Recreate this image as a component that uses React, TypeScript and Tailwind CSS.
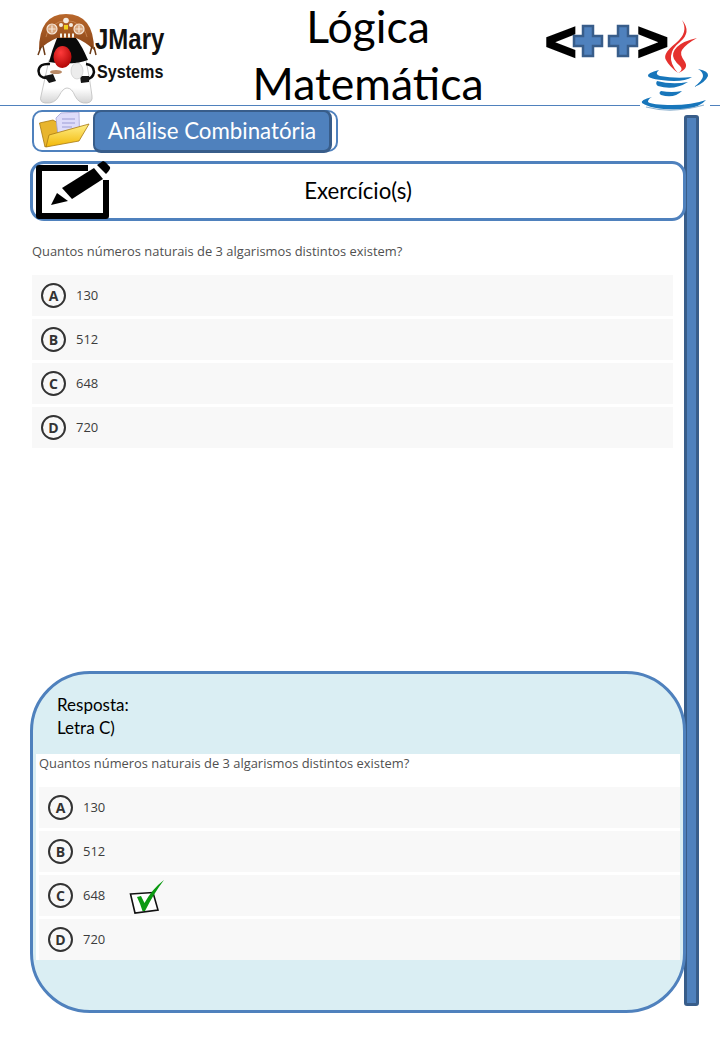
const calibri = "font-['Lato',sans-serif]";
const openSans = "font-['Open_Sans',sans-serif]";

const options = [
  { letter: "A", value: "130" },
  { letter: "B", value: "512" },
  { letter: "C", value: "648" },
  { letter: "D", value: "720" },
];

function DukeLogo() {
  return (
    <svg width="62" height="96" viewBox="36 10 62 96" className="shrink-0">
      <defs>
        <linearGradient id="hat" x1="0" y1="0" x2="0" y2="1">
          <stop offset="0" stopColor="#b9682c" />
          <stop offset="1" stopColor="#8a4518" />
        </linearGradient>
        <radialGradient id="nose" cx="0.4" cy="0.3" r="0.8">
          <stop offset="0" stopColor="#ff3b3b" />
          <stop offset="1" stopColor="#a80000" />
        </radialGradient>
        <linearGradient id="body" x1="0" y1="0" x2="0" y2="1">
          <stop offset="0.65" stopColor="#ffffff" />
          <stop offset="1" stopColor="#d4d4d4" />
        </linearGradient>
      </defs>
      <path d="M49 60 Q45 78 41 96 Q39 102 45 103 Q55 104 59 96 Q63 88 67 88 Q72 88 75 96 Q79 104 87 103 Q93 102 92 96 Q90 80 86 60 Z" fill="url(#body)" stroke="#bdbdbd" strokeWidth="0.8" />
      <path d="M57 38 L76 38 Q82 46 88 60 Q72 66 49 62 Q52 50 57 38 Z" fill="#0a0a0a" />
      <path d="M39 50 Q39 14 66 14 Q94 14 94 50 Q86 42 76 38 L57 38 Q47 42 39 50 Z" fill="url(#hat)" />
      <path d="M41 47 L38 55 M43 46 L45 55 M92 46 L90 54 M94 47 L96 55" stroke="#6b3a16" strokeWidth="1.500" fill="none" />
      <path d="M46 37 A21 21 0 0 1 87 37" fill="none" stroke="#d79a6c" strokeWidth="0.600" />
      <circle cx="52" cy="29" r="5" fill="#d9a67e" stroke="#f5e6d8" strokeWidth="1.200" />
      <path d="M52 25.500 V32.500 M48.500 29 H55.500" stroke="#f5e6d8" strokeWidth="1.200" />
      <circle cx="79" cy="29" r="5" fill="#d9a67e" stroke="#f5e6d8" strokeWidth="1.200" />
      <path d="M79 25.500 V32.500 M75.500 29 H82.500" stroke="#f5e6d8" strokeWidth="1.200" />
      <circle cx="66" cy="20.500" r="2.800" fill="#f5ece2" />
      <circle cx="61" cy="25" r="2" fill="#f5ece2" />
      <circle cx="71" cy="25" r="2" fill="#f5ece2" />
      <rect x="64" y="25" width="4" height="4.500" fill="#f2d21f" />
      <path d="M60 35.500 H62 M64 35.500 H66 M68 35.500 H70 M72 35.500 H74" stroke="#f4f1ea" strokeWidth="4" />
      <ellipse cx="62.500" cy="57" rx="9" ry="11" fill="url(#nose)" />
      <path d="M50 64 Q39 63 38.500 71 Q39 78 47 78" fill="none" stroke="#0a0a0a" strokeWidth="2.500" />
      <path d="M86 64 Q94 65 94 72 Q93 79 86 79" fill="none" stroke="#0a0a0a" strokeWidth="2.500" />
      <path d="M44 76 L53 74 L56 81 L49 83 Z" fill="#151515" />
      <path d="M80 76 L89 76 L89 82 L81 83 Z" fill="#151515" />
      <ellipse cx="56" cy="72" rx="6" ry="2" fill="#b98a66" />
      <ellipse cx="77" cy="71" rx="6" ry="8" fill="#ececec" stroke="#c4c4c4" strokeWidth="0.600" />
    </svg>
  );
}

function JavaLogo() {
  return (
    <svg width="70" height="96" viewBox="640 18 70 96" className="absolute left-[640px] top-[18px] z-10 bg-white">
      <path d="M682 20 Q689 32 676 43 Q662 54 666 60 Q669 66 678 73 Q670 64 671 56 Q672 48 680 42 Q692 32 682 20 Z" fill="#e5312e" />
      <path d="M697 38 Q683 41 677 47 Q671 53 674 59 Q677 64 680 66 Q684 70 678 73 Q689 69 685 62 Q679 54 682 50 Q686 44 697 38 Z" fill="#e5312e" />
      <path d="M659 70 Q647 73 648 76 Q650 80 674 81 Q686 81 692 77 Q676 79 660 76 Q654 74 659 70 Z" fill="#1776bb" />
      <path d="M698 69 Q709 71 708 76 Q705 83 694 87 Q703 80 703 76 Q703 72 698 69 Z" fill="#1776bb" />
      <path d="M657 81 Q672 85 688 82 Q674 91 658 86 Q655 84 657 81 Z" fill="#1776bb" />
      <path d="M661 91 Q672 93 682 91 Q674 99 661 95 Q658 93 661 91 Z" fill="#1776bb" />
      <path d="M652 97 Q640 100 642 103 Q654 111 686 109 Q700 107 706 100 Q692 105 672 105 Q652 105 648 102 Q648 99 652 97 Z" fill="#1776bb" />
      <path d="M646 107 Q672 114 704 105" fill="none" stroke="#8fb2cf" strokeWidth="1.200" />
    </svg>
  );
}

function PlusIcon() {
  return (
    <svg width="32" height="34" viewBox="0 0 32 34" className="shrink-0">
      <path d="M11 2 H21 V12 H30 V22 H21 V32 H11 V22 H2 V12 H11 Z" fill="#4f81bd" stroke="#385d8a" strokeWidth="2.500" />
    </svg>
  );
}

function FolderIcon() {
  return (
    <svg width="52" height="38" viewBox="39 112 52 38" className="shrink-0">
      <defs>
        <linearGradient id="folder" x1="0" y1="0" x2="0" y2="1">
          <stop offset="0" stopColor="#fff08a" />
          <stop offset="1" stopColor="#f2b705" />
        </linearGradient>
      </defs>
      <path d="M39.500 123 L53 120 L58 123 L60 140 L45 147 Z" fill="#e8b52e" stroke="#a8780f" strokeWidth="0.800" />
      <path d="M56 118 L61 113 L79 112 L79.500 132 L58 136 Z" fill="#dedcfa" stroke="#a3a3d6" strokeWidth="0.800" />
      <path d="M62 119 H75 M62 123 H75 M62 127 H72" stroke="#9c9cd6" strokeWidth="1.200" />
      <path d="M49 135 L89 124 L79 141 L46 147 Z" fill="url(#folder)" stroke="#a8780f" strokeWidth="0.800" />
    </svg>
  );
}

function PencilIcon() {
  return (
    <svg width="80" height="64" viewBox="34 157 80 64" className="absolute left-[1px] top-[-5px]">
      <path d="M88 166 H39 V214 H106 V178" fill="none" stroke="#000000" strokeWidth="6" strokeLinejoin="round" />
      <path d="M62 186 L94 166 L103 177 L72 197 Z" fill="#000000" />
      <path d="M57 191 L51 203 L68 199 Z" fill="#000000" />
      <path d="M97 163 L103 159 Q105 159 110 165 Q111 167 106 172 Z" fill="#000000" />
    </svg>
  );
}

function CheckIcon() {
  return (
    <svg width="39" height="38" viewBox="128 875 39 38" className="ml-[23px] shrink-0">
      <path d="M130.500 892 L153 890.500 L158 908 L135 911 Z" fill="#ffffff" stroke="#111111" strokeWidth="1.600" />
      <path d="M137 895 L141 894 L144.500 901 Q152 887 164 878 Q154 891 145 909 L142.500 909 Q140 901 137 895 Z" fill="#0b9a12" />
    </svg>
  );
}

function Quiz({ marked }: { marked?: boolean }) {
  return (
    <div className={openSans}>
      <p className="text-[12.900px] leading-[18px] text-[#505050]">Quantos números naturais de 3 algarismos distintos existem?</p>
      <div className="mt-[15px] flex flex-col gap-[3px]">
        {options.map((option) => (
          <div key={option.letter} className="flex h-[41px] items-center bg-[#f8f8f8] pl-[9px]">
            <span className="flex h-[25px] w-[25px] shrink-0 items-center justify-center rounded-full border-2 border-[#333333] text-[14px] font-bold text-[#333333]">
              {option.letter}
            </span>
            <span className="ml-[10px] text-[13px] font-medium text-[#3c3c3c]">{option.value}</span>
            {marked && option.letter === "C" && <CheckIcon />}
          </div>
        ))}
      </div>
    </div>
  );
}

export default function App() {
  return (
    <div className="relative h-[1040px] w-[720px] overflow-hidden bg-white text-black">
      {/* Header */}
      <header className="grid h-[106px] grid-cols-[240px_256px_224px] border-b border-[#4f81bd]">
        <div className="flex pl-[36px] pt-[10px]">
          <DukeLogo />
          <div className="-ml-[3px] font-['Liberation_Sans',sans-serif] font-bold text-[#111111]">
            <p className="mt-[11px] origin-left scale-x-[0.8] text-[30px] leading-[36px] whitespace-nowrap">JMary</p>
            <p className="mt-[3px] ml-[2px] origin-left scale-x-[0.85] text-[19px] leading-[24px] whitespace-nowrap">Systems</p>
          </div>
        </div>
        <h1 className={`${calibri} text-center text-[44.500px] whitespace-nowrap`}>
          <span className="block h-[54px] leading-[52px]">Lógica</span>
          <span className="block leading-[58px]">Matemática</span>
        </h1>
        <div className="relative z-20 flex h-[57px] items-center pl-[49px] pt-[24px] font-['Liberation_Sans',sans-serif] font-bold">
          <span className="w-[27px] text-center text-[54px] leading-[34px] [-webkit-text-stroke:2px_black]">&lt;</span>
          <PlusIcon />
          <span className="w-[3px]" />
          <PlusIcon />
          <span className="-ml-[2px] w-[28px] text-center text-[54px] leading-[34px] [-webkit-text-stroke:2px_black]">&gt;</span>
        </div>
      </header>
      <JavaLogo />

      <main className="flex">
        <div className="w-[684px] pl-[30px]">
          {/* Topic */}
          <div className="ml-[2px] mt-[4px] flex h-[42px] w-[306px] items-center rounded-[10px] border-[2.500px] border-[#4f81bd] pl-[5px] pr-[4px]">
            <FolderIcon />
            <div className={`${calibri} relative z-10 -my-[2px] ml-[2px] flex h-[43px] flex-1 items-center justify-center rounded-[8px] border-2 border-b-[3px] border-r-[3px] border-[#385d8a] bg-[#4f81bd] text-[22.300px] text-white`}>
              Análise Combinatória
            </div>
          </div>

          {/* Exercise heading */}
          <div className={`${calibri} relative z-10 mt-[9px] flex h-[60px] w-[656px] items-center justify-center rounded-[14px] border-[3px] border-[#4f81bd] bg-white text-[22.200px]`}>
            <PencilIcon />
            <span className="-mt-[1px]">Exercício(s)</span>
          </div>

          <div className="ml-[2px] mr-[11px] mt-[21px]">
            <Quiz />
          </div>

          {/* Answer */}
          <div className="relative z-10 mt-[223px] h-[342px] w-[656px] rounded-[60px] border-[3px] border-[#4f81bd] bg-[#daeef3] pt-[19px]">
            <div className={`${calibri} pl-[24px] text-[17px] leading-[23px]`}>
              <p>Resposta:</p>
              <p>Letra C)</p>
            </div>
            <div className="mx-[3px] mt-[15px] bg-white pl-[3px]">
              <Quiz marked />
            </div>
          </div>
        </div>

        <div className="mt-[9px] h-[891px] w-[15px] rounded-[3px] border-[3px] border-[#385d8a] bg-[#4f81bd]" />
      </main>
    </div>
  );
}
